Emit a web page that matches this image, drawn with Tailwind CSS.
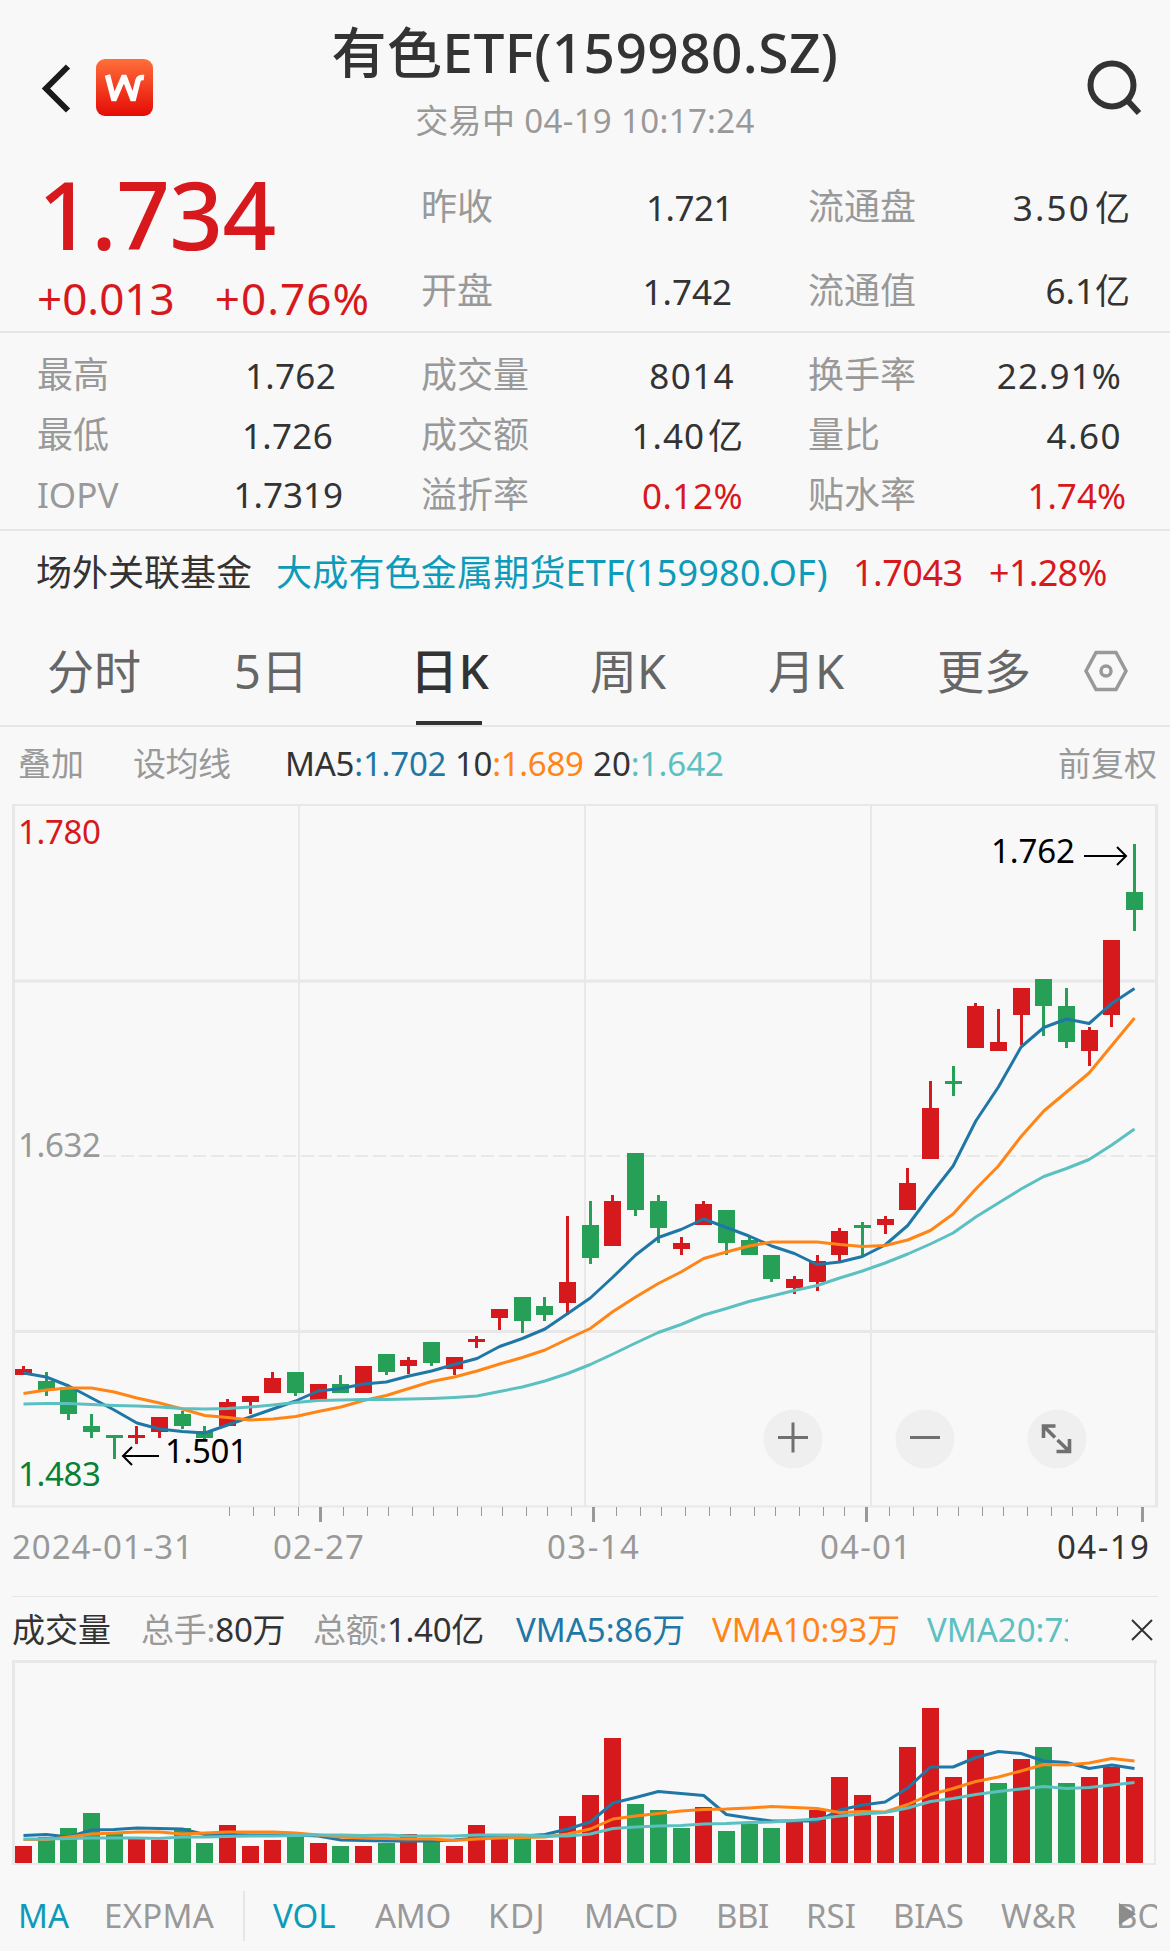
<!DOCTYPE html>
<html lang="zh-CN">
<head>
    <meta charset="UTF-8">
    <meta name="viewport" content="width=device-width, initial-scale=1.0">
    <title>有色ETF(159980.SZ)</title>
    <script src="https://cdn.jsdelivr.net/npm/@tailwindcss/browser@4"></script>
</head>
<body class="w-[1170px] h-[1951px] overflow-hidden bg-[#f8f8f8] text-[#333] font-['Noto_Sans','Noto_Sans_CJK_SC',sans-serif] whitespace-nowrap">

    <!-- Header -->
    <header class="h-[165px] grid grid-cols-[1fr_auto_1fr]">
        <div class="flex items-center h-[175px] pl-10 gap-[22px]">
            <svg class="w-[34px] h-[52px]" viewBox="0 0 34 52" fill="none" stroke="#1a1a1a" stroke-width="6"><path d="M28 4.500L6 26.500l22 22"/></svg>
            <svg class="w-[57px] h-[57px]" viewBox="0 0 57 57">
                <defs><linearGradient id="logo" x1="0" y1="0" x2="0" y2="1"><stop offset="0" stop-color="#ff6f3a"/><stop offset="1" stop-color="#e50b06"/></linearGradient></defs>
                <rect width="57" height="57" rx="9" fill="url(#logo)"/>
                <path d="M11.500 16l6 23.500h1l9-21h1l8 21h1l4.500-18q1-3.500 6-3" fill="none" stroke="#fff" stroke-width="5.500"/>
            </svg>
        </div>
        <div class="pt-4 text-center">
            <h1 class="h-[72px] leading-[72px] text-[55px] tracking-[0.4px] font-medium">有色ETF(159980.SZ)</h1>
            <p class="mt-[9px] h-12 leading-[48px] text-[33px] tracking-[0.35px] text-[#999]">交易中 04-19 10:17:24</p>
        </div>
        <div class="flex items-center justify-end h-[175px] pr-[27px]">
            <svg class="w-[58px] h-[60px]" viewBox="0 0 58 60" fill="none" stroke="#333" stroke-width="6"><circle cx="27" cy="27" r="21.500"/><path d="M42 42l12 13"/></svg>
        </div>
    </header>

    <!-- Price -->
    <section class="flex h-[168px] border-b-2 border-[#e6e6e6]">
        <div class="w-[421px] text-[#d7181d]">
            <div class="h-[104px] pl-[38px] leading-[98px] text-[94px] tracking-[-0.6px] font-medium">1.734</div>
            <div class="flex gap-[40px] pl-[37px] leading-[58px] text-[44px]"><span>+0.013</span><span class="tracking-[1.1px]">+0.76%</span></div>
        </div>
        <div class="w-[387px] text-[35px]">
            <div class="flex h-[84px] items-center justify-between pr-[75px]"><span class="text-4xl text-[#999]">昨收</span><span class="pt-0.5 tracking-[-0.5px]">1.721</span></div>
            <div class="flex h-[84px] items-center justify-between pr-[76px]"><span class="text-4xl text-[#999]">开盘</span><span class="pt-0.5">1.742</span></div>
        </div>
        <div class="flex-1 text-[35px]">
            <div class="flex h-[84px] items-center justify-between pr-10"><span class="text-4xl text-[#999]">流通盘</span><span class="pt-0.5"><span class="mr-1 tracking-[2.2px]">3.50</span>亿</span></div>
            <div class="flex h-[84px] items-center justify-between pr-10"><span class="text-4xl text-[#999]">流通值</span><span>6.1亿</span></div>
        </div>
    </section>

    <!-- Stats -->
    <section class="grid grid-cols-[384px_387px_362px] auto-rows-[60px] h-[198px] pt-3 pl-[37px] border-b-2 border-[#e6e6e6] text-[35px]">
        <div class="flex items-center justify-between pr-[85px]"><span class="text-4xl text-[#999]">最高</span><span class="pt-0.5 tracking-[0.3px]">1.762</span></div>
        <div class="flex items-center justify-between pr-[73px]"><span class="text-4xl text-[#999]">成交量</span><span class="pt-0.5 tracking-[1.4px]">8014</span></div>
        <div class="flex items-center justify-between pr-12"><span class="text-4xl text-[#999]">换手率</span><span class="pt-0.5 tracking-[1.1px]">22.91%</span></div>
        <div class="flex items-center justify-between pr-[88px]"><span class="text-4xl text-[#999]">最低</span><span class="pt-0.5 tracking-[0.3px]">1.726</span></div>
        <div class="flex items-center justify-between pr-[65px]"><span class="text-4xl text-[#999]">成交额</span><span class="pt-0.5"><span class="mr-[3px] tracking-[1px]">1.40</span>亿</span></div>
        <div class="flex items-center justify-between pr-12"><span class="text-4xl text-[#999]">量比</span><span class="pt-0.5 tracking-[1.5px]">4.60</span></div>
        <div class="flex items-center justify-between pr-[78px]"><span class="text-[#999]">IOPV</span><span>1.7319</span></div>
        <div class="flex items-center justify-between pr-[65px]"><span class="text-4xl text-[#999]">溢折率</span><span class="pt-0.5 tracking-[0.5px] text-[#d7181d]">0.12%</span></div>
        <div class="flex items-center justify-between pr-[44px]"><span class="text-4xl text-[#999]">贴水率</span><span class="pt-0.5 text-[#d7181d]">1.74%</span></div>
    </section>

    <!-- Linked fund -->
    <section class="flex items-center h-[82px] pt-0.5 pl-9 text-4xl">
        <span class="w-[240px]">场外关联基金</span>
        <span class="w-[577px] tracking-[0.2px] text-[#0d9bb9]">大成有色金属期货ETF(159980.OF)</span>
        <span class="w-[136px] tracking-[-0.5px] text-[#d7181d]">1.7043</span>
        <span class="tracking-[-0.7px] text-[#d7181d]">+1.28%</span>
    </section>

    <!-- Period tabs -->
    <nav class="flex items-center h-[114px] pt-1 pl-[47px] border-b-2 border-[#e6e6e6] text-[47px] text-[#666]">
        <span class="w-[187px]">分时</span>
        <span class="w-[176px]">5日</span>
        <span class="relative flex items-center w-[180px] h-full text-[48px] tracking-[0.5px] font-medium text-[#333]">日K<i class="absolute left-[6px] bottom-0 w-[66px] h-1 bg-[#333]"></i></span>
        <span class="w-[178px]">周K</span>
        <span class="w-[169px]">月K</span>
        <span class="w-[147px]">更多</span>
        <svg class="w-11 h-11" viewBox="0 0 44 44" fill="none" stroke="#999" stroke-width="3.500"><path d="M12 3.500h20L42 22 32 40.500H12L2 22z"/><circle cx="22" cy="22" r="5"/></svg>
    </nav>

    <!-- MA legend -->
    <section class="flex items-center h-[72px] pt-0.5 pl-[18px] pr-[13px] text-[33px]">
        <span class="w-[115px] text-[#999]">叠加</span>
        <span class="w-[152px] tracking-[-0.5px] text-[#999]">设均线</span>
        <span class="w-[170px] tracking-[-0.2px]">MA5<span class="text-[#1f77a6]">:1.702</span></span>
        <span class="w-[138px] tracking-[-0.3px]">10<span class="text-[#ff8616]">:1.689</span></span>
        <span class="flex-1">20<span class="text-[#5cc0c0]">:1.642</span></span>
        <span class="text-[#999]">前复权</span>
    </section>

    <!-- Candles -->
    <svg id="kline" class="block w-[1170px] h-[797px]" viewBox="0 799 1170 797" fill="none">
        <g stroke="#e8e8e8">
            <path d="M13.500 805V1507M1156.500 805V1507" stroke-width="3"/>
            <path d="M12 805H1158M12 1506.500H1158M299 805V1507M585 805V1507M871 805V1507" stroke-width="2"/>
            <path d="M15 981H1155M15 1331.500H1155" stroke-width="3"/>
            <path d="M103 1156H1155" stroke-width="2" stroke-dasharray="13 5"/>
        </g>
        <g id="ticks" stroke="#999"></g>
        <g id="candles"></g>
        <g id="priceLines" stroke-width="3" stroke-linejoin="round"></g>
        <g font-size="33">
            <text x="18" y="844" textLength="83" fill="#d7181d">1.780</text>
            <text x="18" y="1157" textLength="83" fill="#999">1.632</text>
            <text x="18" y="1486" textLength="83" fill="#078235">1.483</text>
            <text x="165" y="1463" textLength="83" fill="#000">1.501</text>
            <text x="991" y="863" textLength="84" fill="#000">1.762</text>
            <g fill="#999">
                <text x="12" y="1559" textLength="181">2024-01-31</text>
                <text x="273" y="1559" textLength="91">02-27</text>
                <text x="547" y="1559" textLength="92">03-14</text>
                <text x="820" y="1559" textLength="91">04-01</text>
            </g>
            <text x="1057" y="1559" textLength="92" fill="#333">04-19</text>
        </g>
        <path d="M159 1456H123M132 1447l-9 9 9 9M1084 856h42M1117 847l9 9-9 9" stroke="#000" stroke-width="2"/>
        <g fill="#efefef"><circle cx="793" cy="1439" r="29.500"/><circle cx="925" cy="1439" r="29.500"/><circle cx="1057" cy="1439" r="29.500"/></g>
        <g stroke="#707070" stroke-width="3">
            <path d="M778 1437.500h30M793 1422.500v30M910 1437.500h30"/>
            <path stroke-width="3.600" d="M1055.500 1426h-12v12M1043.500 1426l11.500 11.500M1069.500 1439v12.500h-13M1069.500 1451.500l-12-11.500"/>
        </g>
    </svg>

    <!-- Volume legend -->
    <section class="flex items-center h-16 mx-3 pt-0.5 border-t border-[#e6e6e6] text-[33px]">
        <span class="w-[129px]">成交量</span>
        <span class="w-[172px] tracking-[-0.2px]"><span class="text-[#999]">总手:</span>80万</span>
        <span class="w-[203px] tracking-[-0.3px]"><span class="text-[#999]">总额:</span>1.40亿</span>
        <span class="w-[196px] text-[#1f77a6]">VMA5:86万</span>
        <span class="w-[215px] text-[#ff8616]">VMA10:93万</span>
        <span class="w-[141px] overflow-hidden text-[#5cc0c0]">VMA20:73万</span>
        <svg class="ml-auto mr-[5px] w-[22px] h-[22px]" viewBox="0 0 22 22" stroke="#333" stroke-width="2"><path d="M1 1l20 20M21 1L1 21"/></svg>
    </section>

    <!-- Volume bars -->
    <svg id="volume" class="block w-[1170px] h-[210px]" viewBox="0 1660 1170 210" fill="none">
        <g stroke="#e8e8e8"><path d="M12 1661.500H1157M13.500 1660V1865" stroke-width="3"/><path d="M1155 1660V1865M12 1864H1156" stroke-width="2"/></g>
        <g id="bars"></g>
        <g id="volumeLines" stroke-width="3" stroke-linejoin="round"></g>
    </svg>

    <!-- Indicator tabs -->
    <nav class="flex items-center h-[81px] pt-[10px] pl-[18px] text-[33px] text-[#999]">
        <span class="w-[86px] text-[#0d9bb9]">MA</span>
        <span class="w-[139px] tracking-[0.3px]">EXPMA</span>
        <i class="w-0.5 h-[50px] mr-[28px] bg-[#e6e6e6]"></i>
        <span class="w-[102px] text-[#0d9bb9]">VOL</span>
        <span class="w-[113px] tracking-[-0.3px]">AMO</span>
        <span class="w-[96px] tracking-[1.5px]">KDJ</span>
        <span class="w-[132px] tracking-[-0.3px]">MACD</span>
        <span class="w-[90px] tracking-[-0.4px]">BBI</span>
        <span class="w-[87px]">RSI</span>
        <span class="w-[108px] tracking-[-0.3px]">BIAS</span>
        <span class="w-[115px]">W&amp;R</span>
        <span class="relative w-[41px] overflow-hidden">BOLL<i class="absolute left-[3px] top-3 border-y-[11px] border-l-[17px] border-y-transparent border-l-[#8c8c8c]"></i></span>
    </nav>

    <script>
        const RED = '#d5191c', GREEN = '#27a057';
        const COLORS = ['#1f77a6', '#ff8616', '#5cc0c0'];
        const px = i => 23.5 + i * 22.673;

        // color, wick top, body top, body bottom, wick bottom
        const candles = [
            ['r',1366,1369,1375,1375],['g',1372,1381,1390,1396],['g',1387,1387,1414,1420],['g',1414,1426,1432,1438],['g',1435,1435,1438,1459],
            ['r',1426,1435,1438,1444],['r',1417,1417,1432,1438],['g',1411,1414,1426,1429],['g',1426,1431,1438,1441],['r',1399,1402,1426,1426],
            ['r',1396,1396,1402,1414],['r',1372,1378,1393,1393],['g',1372,1372,1393,1396],['r',1384,1384,1401,1401],['g',1375,1384,1393,1393],
            ['r',1366,1366,1393,1393],['g',1354,1354,1372,1375],['r',1357,1360,1366,1374],['g',1342,1342,1363,1366],['r',1357,1357,1369,1375],
            ['r',1336,1339,1342,1348],['r',1309,1309,1318,1330],['g',1297,1297,1321,1333],['g',1297,1306,1315,1321],['r',1216,1282,1303,1315],
            ['g',1201,1225,1258,1264],['r',1195,1201,1246,1246],['g',1153,1153,1210,1216],['g',1195,1201,1228,1243],['r',1237,1243,1249,1255],
            ['r',1201,1204,1225,1225],['g',1210,1210,1243,1255],['g',1237,1240,1255,1255],['g',1255,1255,1279,1282],['r',1276,1279,1288,1294],
            ['r',1255,1261,1282,1291],['r',1228,1231,1255,1261],['g',1222,1225,1228,1255],['r',1216,1219,1225,1234],['r',1168,1183,1210,1210],
            ['r',1081,1108,1159,1159],['g',1066,1081,1084,1096],['r',1003,1006,1048,1048],['r',1009,1042,1051,1051],['r',988,988,1015,1045],
            ['g',979,979,1006,1036],['g',988,1006,1042,1048],['r',1027,1030,1051,1066],['r',940,940,1015,1027],['g',844,892,910,931]
        ];
        const priceMA = [
            [1373,1377,1386,1398,1410,1423,1429,1431.5,1433,1425,1417,1409,1401,1391,1388.5,1384,1382,1376,1371,1364.5,1358.5,1346.5,1338.5,1329,1313.5,1298,1277,1255,1237.5,1229.5,1219,1227.5,1236,1246,1253.5,1264.5,1262,1256.5,1245,1225.5,1195,1166,1121,1087,1047,1027.5,1019,1023.5,1003.5,988.5],
            [1393.5,1390,1388,1388,1392,1398,1403,1409,1415.5,1417.5,1420,1419,1416.5,1411.5,1407,1400.5,1395.5,1388.5,1381.5,1377,1371,1364,1357.5,1350,1339,1328.5,1311.5,1297,1283.5,1272,1258.5,1252,1246,1242,1242,1242,1244.5,1246.5,1245.5,1240,1230.5,1214,1189,1166,1136.5,1111,1092,1073,1045.5,1018],
            [1404,1403.5,1403.5,1404.5,1405.5,1406,1407,1408.5,1409,1408.5,1407,1405,1402.5,1400.5,1400,1399.5,1399.5,1399,1398.5,1397.5,1396,1391.5,1387,1381,1373.5,1364.5,1354,1343,1332.5,1324.5,1315,1308.5,1301.5,1296,1290.5,1285.5,1278,1271,1263,1254,1244,1233,1217,1203,1189,1176.5,1168.5,1159.5,1145,1129]
        ];
        const volumes = [1846,1837,1828,1813,1834,1839,1840,1828,1843,1825,1846,1840,1837,1843,1846,1846,1843,1834,1841,1846,1825,1839,1838,1840,1816,1795,1738,1804,1810,1828,1807,1831,1824,1828,1822,1810,1777,1795,1816,1747,1708,1777,1750,1783,1759,1747,1783,1777,1767,1777];
        // colored by the change from the previous close, not by the candle body
        const volumeColors = 'rggggrrggrrrgrgrgrgrrrgrrrrggg' + 'rgggrrrrrrrrrgrggrrr';
        const volumeMA = [
            [1835.5,1834.5,1837,1830,1829.5,1828,1828.5,1829,1834.5,1834.5,1835,1835,1835,1836,1840,1840.5,1841,1841,1841,1840,1838,1837,1836,1834.5,1829,1822,1803,1797.5,1791.5,1793.5,1795.5,1814.5,1818,1821,1821,1821,1810,1805,1802,1788,1767,1767,1757.5,1751.5,1753.5,1761,1762.5,1768.5,1765,1768.5],
            [1839.5,1839.5,1837,1834,1833,1832,1832,1834,1833,1832,1832,1832,1833,1835,1837,1838,1838.5,1839,1839,1840.5,1839,1838,1837.5,1837,1834,1829,1819,1816,1813.5,1811,1809.5,1809,1808,1806.5,1807.5,1808.5,1812.5,1811.5,1812,1804.5,1794.5,1788.5,1781.5,1777,1771,1764.5,1765,1763,1758.5,1761],
            [1839,1839,1838.5,1838,1838,1838,1838.5,1837,1837,1836.5,1836,1836,1835.5,1835,1835,1835.5,1835,1836,1836,1836,1835,1835,1835,1836,1836,1834,1828.5,1827,1826,1825.5,1824,1823.5,1822.5,1822,1820.5,1819,1816,1814,1812.5,1808,1801.5,1798.5,1794.5,1791.5,1789,1786.5,1788.5,1787.5,1785,1782.5]
        ];

        const rect = (x, y, w, h, fill) => `<rect x="${x}" y="${y}" width="${w}" height="${h}" fill="${fill}"/>`;
        const line = (ys, i) => `<polyline stroke="${COLORS[i]}" points="${ys.map((y, n) => px(n).toFixed(1) + ',' + y).join(' ')}"/>`;

        document.getElementById('candles').innerHTML = candles.map(([c, wt, bt, bb, wb], i) => {
            const fill = c === 'r' ? RED : GREEN, x = Math.round(px(i) - 0.5);
            return rect(x - 1, wt, 3, wb - wt, fill) + rect(x - 8, bt, 17, bb - bt, fill);
        }).join('');
        document.getElementById('bars').innerHTML = volumes.map((y, i) =>
            rect(Math.round(px(i) - 8.5), y, 17, 1863 - y, volumeColors[i] === 'r' ? RED : GREEN)).join('');
        document.getElementById('priceLines').innerHTML = priceMA.map(line).join('');
        document.getElementById('volumeLines').innerHTML = volumeMA.map(line).join('');

        const minor = [229,253,274,298,343,367,388,412,433,457,481,502,526,547,571,616,640,661,685,709,730,754,775,799,823,844,889,913,937,958,982,1003,1027,1051,1072,1096,1117];
        document.getElementById('ticks').innerHTML =
            minor.map(x => `<path d="M${x + 0.5} 1507v9"/>`).join('') +
            [320.5, 593.5, 866.5, 1142.5].map(x => `<path stroke-width="3" d="M${x} 1507v15"/>`).join('');
    </script>
</body>
</html>
